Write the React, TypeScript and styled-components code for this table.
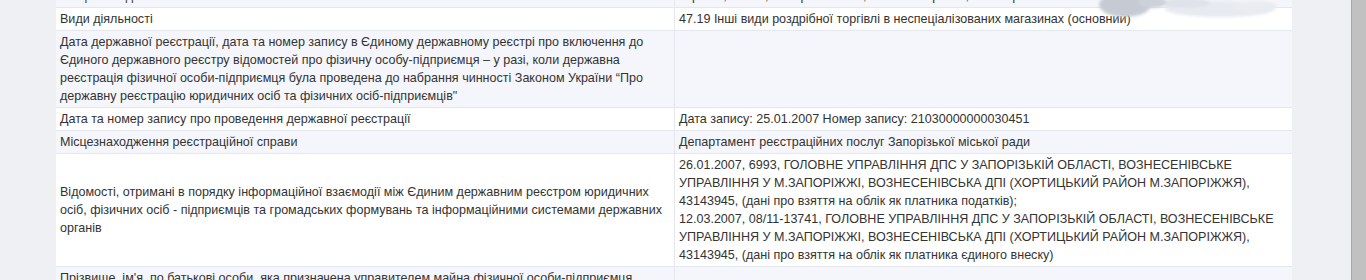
import React from "react";
import styled, { createGlobalStyle } from "styled-components";

const GlobalStyle = createGlobalStyle`
  html, body {
    margin: 0;
    padding: 0;
    height: 280px;
    overflow: hidden;
    background: #eef0f4;
  }
  body {
    font-family: "Liberation Sans", Arial, sans-serif;
  }
`;

const Page = styled.div`
  display: flex;
  height: 280px;
  overflow: hidden;
`;

const Content = styled.div`
  flex: 1;
  position: relative;
  overflow: hidden;
`;

const Scrollbar = styled.div`
  width: 14px;
  border-left: 1px solid #a8a8a8;
  background: #c1c1c1;
`;

const Table = styled.div`
  width: 1236px;
  margin: -15px 0 0 56px;
  display: grid;
  grid-template-columns: 618px 618px;
  font-size: 12.55px;
  line-height: 18px;
  color: #333;
`;

const Cell = styled.div<{ $shade?: boolean; $middle?: boolean; $right?: boolean }>`
  padding: 2px 4px 2px 4px;
  background: ${(p) => (p.$shade ? "#f5f6fb" : "#ffffff")};
  border-bottom: 1px solid #e4e7ee;
  border-left: ${(p) => (p.$right ? "1px solid #e4e7ee" : "none")};
  display: flex;
  align-items: ${(p) => (p.$middle ? "center" : "flex-start")};
`;

// blurred redaction mark that lies over the address cell
const Smudge = styled.svg`
  position: absolute;
  left: 1080px;
  top: 0;
`;

type Row = { label: string; value: React.ReactNode; middle?: boolean };

const rows: Row[] = [
  {
    label: "Місцезнаходження",
    value: "Україна, 69014, Запорізька обл., місто Запоріжжя, ВУЛИЦЯ РОБОЧА",
  },
  {
    label: "Види діяльності",
    value:
      "47.19 Інші види роздрібної торгівлі в неспеціалізованих магазинах (основний)",
  },
  {
    label:
      "Дата державної реєстрації, дата та номер запису в Єдиному державному реєстрі про включення до Єдиного державного реєстру відомостей про фізичну особу-підприємця – у разі, коли державна реєстрація фізичної особи-підприємця була проведена до набрання чинності Законом України “Про державну реєстрацію юридичних осіб та фізичних осіб-підприємців\"",
    value: "",
  },
  {
    label: "Дата та номер запису про проведення державної реєстрації",
    value: "Дата запису: 25.01.2007 Номер запису: 21030000000030451",
  },
  {
    label: "Місцезнаходження реєстраційної справи",
    value: "Департамент реєстраційних послуг Запорізької міської ради",
  },
  {
    label:
      "Відомості, отримані в порядку інформаційної взаємодії між Єдиним державним реєстром юридичних осіб, фізичних осіб - підприємців та громадських формувань та інформаційними системами державних органів",
    middle: true,
    value: (
      <div>
        26.01.2007, 6993, ГОЛОВНЕ УПРАВЛІННЯ ДПС У ЗАПОРІЗЬКІЙ ОБЛАСТІ,
        ВОЗНЕСЕНІВСЬКЕ УПРАВЛІННЯ У М.ЗАПОРІЖЖІ, ВОЗНЕСЕНІВСЬКА ДПІ (ХОРТИЦЬКИЙ
        РАЙОН М.ЗАПОРІЖЖЯ), 43143945, (дані про взяття на облік як платника
        податків);
        <br />
        12.03.2007, 08/11-13741, ГОЛОВНЕ УПРАВЛІННЯ ДПС У ЗАПОРІЗЬКІЙ ОБЛАСТІ,
        ВОЗНЕСЕНІВСЬКЕ УПРАВЛІННЯ У М.ЗАПОРІЖЖІ, ВОЗНЕСЕНІВСЬКА ДПІ (ХОРТИЦЬКИЙ
        РАЙОН М.ЗАПОРІЖЖЯ), 43143945, (дані про взяття на облік як платника
        єдиного внеску)
      </div>
    ),
  },
  {
    label:
      "Прізвище, ім'я, по батькові особи, яка призначена управителем майна фізичної особи-підприємця",
    value: "",
  },
];

const App = () => {
  return (
    <>
      <GlobalStyle />
      <Page>
        <Content>
          <Table>
            {rows.map((row, index) => (
              <React.Fragment key={index}>
                <Cell $shade={index % 2 === 0} $middle={row.middle}>
                  {row.label}
                </Cell>
                <Cell $shade={index % 2 === 0} $right>
                  {row.value}
                </Cell>
              </React.Fragment>
            ))}
          </Table>
          <Smudge width="210" height="30" viewBox="0 0 210 30">
            <defs>
              <filter id="blur" x="-20%" y="-50%" width="140%" height="200%">
                <feGaussianBlur stdDeviation="1.5" />
              </filter>
            </defs>
            <g filter="url(#blur)">
              <ellipse cx="140" cy="9" rx="55" ry="8" fill="#e7eaf0" />
              <ellipse cx="175" cy="6" rx="22" ry="5" fill="#e9ecf1" />
              <ellipse cx="105" cy="3" rx="25" ry="5" fill="#dfe2e8" />
              <ellipse cx="45" cy="5" rx="26" ry="12" fill="#c6cbd3" />
              <ellipse cx="72" cy="2" rx="14" ry="6" fill="#cdd1d9" />
            </g>
          </Smudge>
        </Content>
        <Scrollbar />
      </Page>
    </>
  );
};

export default App;
